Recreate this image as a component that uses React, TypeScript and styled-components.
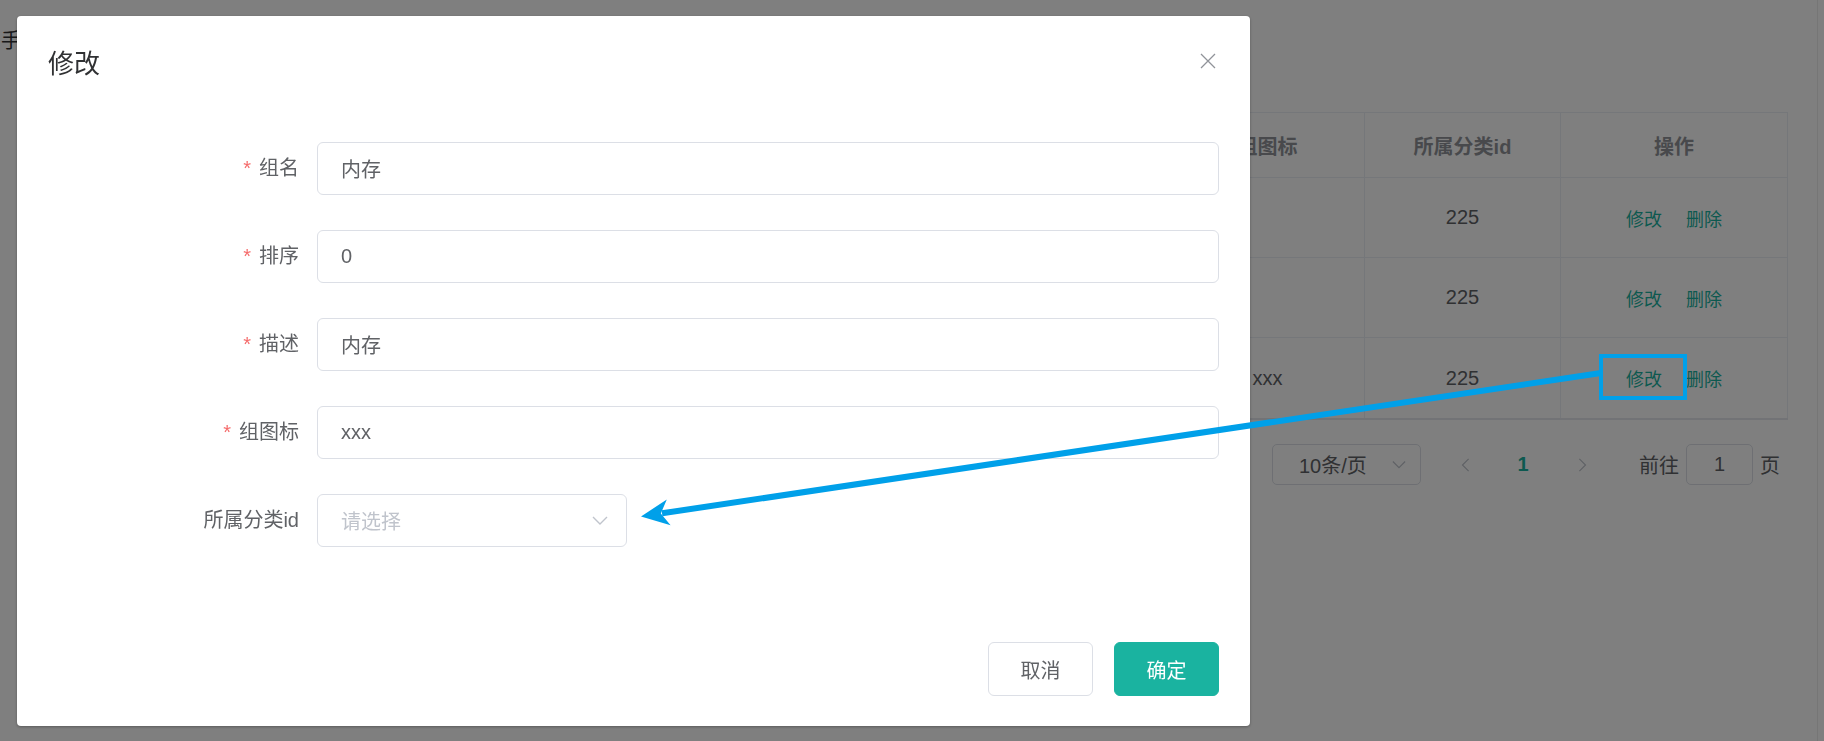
import React from "react";
import styled, { createGlobalStyle } from "styled-components";

const Global = createGlobalStyle`
  html, body {
    margin: 0;
    padding: 0;
    width: 1824px;
    height: 741px;
    overflow: hidden;
    background: #fff;
  }
  body {
    font-family: "Liberation Sans", "Noto Sans CJK SC", sans-serif;
    color: #606266;
  }
  * { box-sizing: border-box; }
`;

const TEAL = "#1ab3a0";

/* ---------- background page ---------- */

const Page = styled.div`
  display: flex;
  width: 1824px;
  height: 741px;
  background: #fff;
`;

const Main = styled.div`
  flex: 1;
  padding: 0 29px 0 0;
`;

const ScrollTrack = styled.div`
  width: 8px;
  border-left: 1px solid #ececec;
  background: #fff;
`;

const TopBar = styled.div`
  height: 112px;
  padding-top: 31px;
  padding-left: 1px;
  font-size: 20px;
  line-height: 20px;
  color: #303133;
`;

const Table = styled.div`
  margin-left: 40px;
  display: grid;
  grid-template-columns: 150px 260px 190px 530px 194px 196px 227px;
  border-top: 1px solid #ebeef5;
  border-left: 1px solid #ebeef5;
  border-bottom: 2px solid #e4e7ed;
`;

const HeadCell = styled.div`
  height: 65px;
  display: flex;
  align-items: center;
  justify-content: center;
  border-right: 1px solid #ebeef5;
  border-bottom: 1px solid #ebeef5;
  font-size: 20px;
  font-weight: bold;
  color: #909399;
`;

const Cell = styled.div<{ $last?: boolean }>`
  height: 80px;
  display: flex;
  align-items: center;
  justify-content: center;
  gap: 24px;
  border-right: 1px solid #ebeef5;
  border-bottom: ${(p) => (p.$last ? "none" : "1px solid #ebeef5")};
  font-size: 20px;
  color: #606266;
`;

const LinkText = styled.span`
  color: ${TEAL};
  font-size: 18px;
`;

const Pagination = styled.div`
  display: flex;
  align-items: center;
  justify-content: flex-end;
  margin-top: 24px;
  padding-right: 8px;
  height: 41px;
  font-size: 20px;
  color: #606266;
`;

const SizeSelect = styled.div`
  width: 149px;
  height: 41px;
  border: 1px solid #dcdfe6;
  border-radius: 5px;
  display: flex;
  align-items: center;
  justify-content: space-between;
  padding: 0 14px 0 26px;
`;

const PageBtn = styled.div<{ $ml: number }>`
  width: 42px;
  height: 41px;
  margin-left: ${(p) => p.$ml}px;
  display: flex;
  align-items: center;
  justify-content: center;
`;

const PagerNum = styled.div`
  width: 52px;
  margin-left: 10px;
  text-align: center;
  font-weight: bold;
  color: ${TEAL};
`;

const Jumper = styled.div`
  margin-left: 36px;
  display: flex;
  align-items: center;
  gap: 7px;
`;

const JumpInput = styled.div`
  width: 67px;
  height: 41px;
  border: 1px solid #dcdfe6;
  border-radius: 5px;
  display: flex;
  align-items: center;
  justify-content: center;
`;

/* ---------- modal ---------- */

const Overlay = styled.div`
  position: fixed;
  inset: 0;
  background: rgba(0, 0, 0, 0.5);
`;

const Dialog = styled.div`
  position: absolute;
  left: 17px;
  top: 16px;
  width: 1233px;
  background: #fff;
  border-radius: 4px;
  box-shadow: 0 1px 3px rgba(0, 0, 0, 0.3);
`;

const DialogHeader = styled.div`
  position: relative;
  padding: 34px 31px 0 31px;
`;

const Title = styled.div`
  font-size: 26px;
  line-height: 28px;
  color: #303133;
`;

const CloseBtn = styled.div`
  position: absolute;
  top: 37px;
  right: 34px;
  width: 16px;
  height: 16px;
  display: flex;
`;

const DialogBody = styled.div`
  padding: 64px 31px 0 31px;
  display: flex;
  flex-direction: column;
  gap: 35px;
`;

const FormItem = styled.div`
  display: flex;
  align-items: center;
  height: 53px;
`;

const Label = styled.label`
  width: 269px;
  padding-right: 18px;
  text-align: right;
  font-size: 20px;
  line-height: 53px;
  color: #606266;
`;

const Star = styled.span`
  color: #f56c6c;
  margin-right: 8px;
`;

const TextInput = styled.input`
  flex: 1;
  height: 53px;
  border: 1px solid #dcdfe6;
  border-radius: 6px;
  padding: 0 23px;
  font-family: inherit;
  font-size: 20px;
  color: #606266;
  background: #fff;
  outline: none;
`;

const SelectBox = styled.div`
  width: 310px;
  height: 53px;
  border: 1px solid #dcdfe6;
  border-radius: 6px;
  padding: 0 18px 0 23px;
  display: flex;
  align-items: center;
  justify-content: space-between;
  font-size: 20px;
  color: #c0c4cc;
`;

const DialogFooter = styled.div`
  display: flex;
  justify-content: flex-end;
  gap: 21px;
  padding: 95px 31px 30px 31px;
`;

const Button = styled.button<{ $primary?: boolean }>`
  width: 105px;
  height: 54px;
  border-radius: 6px;
  font-family: inherit;
  font-size: 20px;
  cursor: pointer;
  border: 1px solid ${(p) => (p.$primary ? TEAL : "#dcdfe6")};
  background: ${(p) => (p.$primary ? TEAL : "#fff")};
  color: ${(p) => (p.$primary ? "#fff" : "#606266")};
`;

const Annotation = styled.svg`
  position: fixed;
  left: 0;
  top: 0;
  pointer-events: none;
`;

const Chevron = ({ dir, size, color }: { dir: "down" | "left" | "right"; size: number; color: string }) => {
  const pts =
    dir === "down"
      ? "1,4 8,11 15,4"
      : dir === "left"
      ? "11,1 4,8 11,15"
      : "5,1 12,8 5,15";
  return (
    <svg width={size} height={size} viewBox="0 0 16 16">
      <polyline points={pts} fill="none" stroke={color} strokeWidth="1.4" />
    </svg>
  );
};

const rows = [
  { icon: "", cat: "225" },
  { icon: "", cat: "225" },
  { icon: "xxx", cat: "225" },
];

const fields = [
  { label: "组名", value: "内存" },
  { label: "排序", value: "0" },
  { label: "描述", value: "内存" },
  { label: "组图标", value: "xxx" },
];

export default function App() {
  return (
    <>
      <Global />
      <Page>
        <Main>
          <TopBar>手机</TopBar>
          <Table>
            <HeadCell>分组id</HeadCell>
            <HeadCell>组名</HeadCell>
            <HeadCell>排序</HeadCell>
            <HeadCell>描述</HeadCell>
            <HeadCell>组图标</HeadCell>
            <HeadCell>所属分类id</HeadCell>
            <HeadCell>操作</HeadCell>
            {rows.map((r, i) => {
              const last = i === rows.length - 1;
              return (
                <React.Fragment key={i}>
                  <Cell $last={last}>{i + 1}</Cell>
                  <Cell $last={last}>内存</Cell>
                  <Cell $last={last}>0</Cell>
                  <Cell $last={last}>内存</Cell>
                  <Cell $last={last}>{r.icon}</Cell>
                  <Cell $last={last}>{r.cat}</Cell>
                  <Cell $last={last}>
                    <LinkText>修改</LinkText>
                    <LinkText>删除</LinkText>
                  </Cell>
                </React.Fragment>
              );
            })}
          </Table>
          <Pagination>
            <SizeSelect>
              <span>10条/页</span>
              <Chevron dir="down" size={14} color="#c0c4cc" />
            </SizeSelect>
            <PageBtn $ml={24}>
              <Chevron dir="left" size={14} color="#c0c4cc" />
            </PageBtn>
            <PagerNum>1</PagerNum>
            <PageBtn $ml={12}>
              <Chevron dir="right" size={14} color="#c0c4cc" />
            </PageBtn>
            <Jumper>
              <span>前往</span>
              <JumpInput>1</JumpInput>
              <span>页</span>
            </Jumper>
          </Pagination>
        </Main>
        <ScrollTrack />
      </Page>

      <Overlay>
        <Dialog>
          <DialogHeader>
            <Title>修改</Title>
            <CloseBtn>
              <svg width="16" height="16" viewBox="0 0 16 16">
                <path d="M1 1 L15 15 M15 1 L1 15" stroke="#909399" strokeWidth="1.3" fill="none" />
              </svg>
            </CloseBtn>
          </DialogHeader>
          <DialogBody>
            {fields.map((f) => (
              <FormItem key={f.label}>
                <Label>
                  <Star>*</Star>
                  {f.label}
                </Label>
                <TextInput readOnly value={f.value} />
              </FormItem>
            ))}
            <FormItem>
              <Label>所属分类id</Label>
              <SelectBox>
                <span>请选择</span>
                <Chevron dir="down" size={16} color="#c0c4cc" />
              </SelectBox>
            </FormItem>
          </DialogBody>
          <DialogFooter>
            <Button>取消</Button>
            <Button $primary>确定</Button>
          </DialogFooter>
        </Dialog>
      </Overlay>

      <Annotation width="1824" height="741" viewBox="0 0 1824 741">
        <rect x="1601" y="356" width="84" height="42" fill="none" stroke="#00a0e9" strokeWidth="4" />
        <line x1="1601" y1="373" x2="662" y2="513.3" stroke="#00a0e9" strokeWidth="6" />
        <polygon points="641,516.5 666.8,499.5 660.8,513.5 670.6,525.3" fill="#00a0e9" />
      </Annotation>
    </>
  );
}
